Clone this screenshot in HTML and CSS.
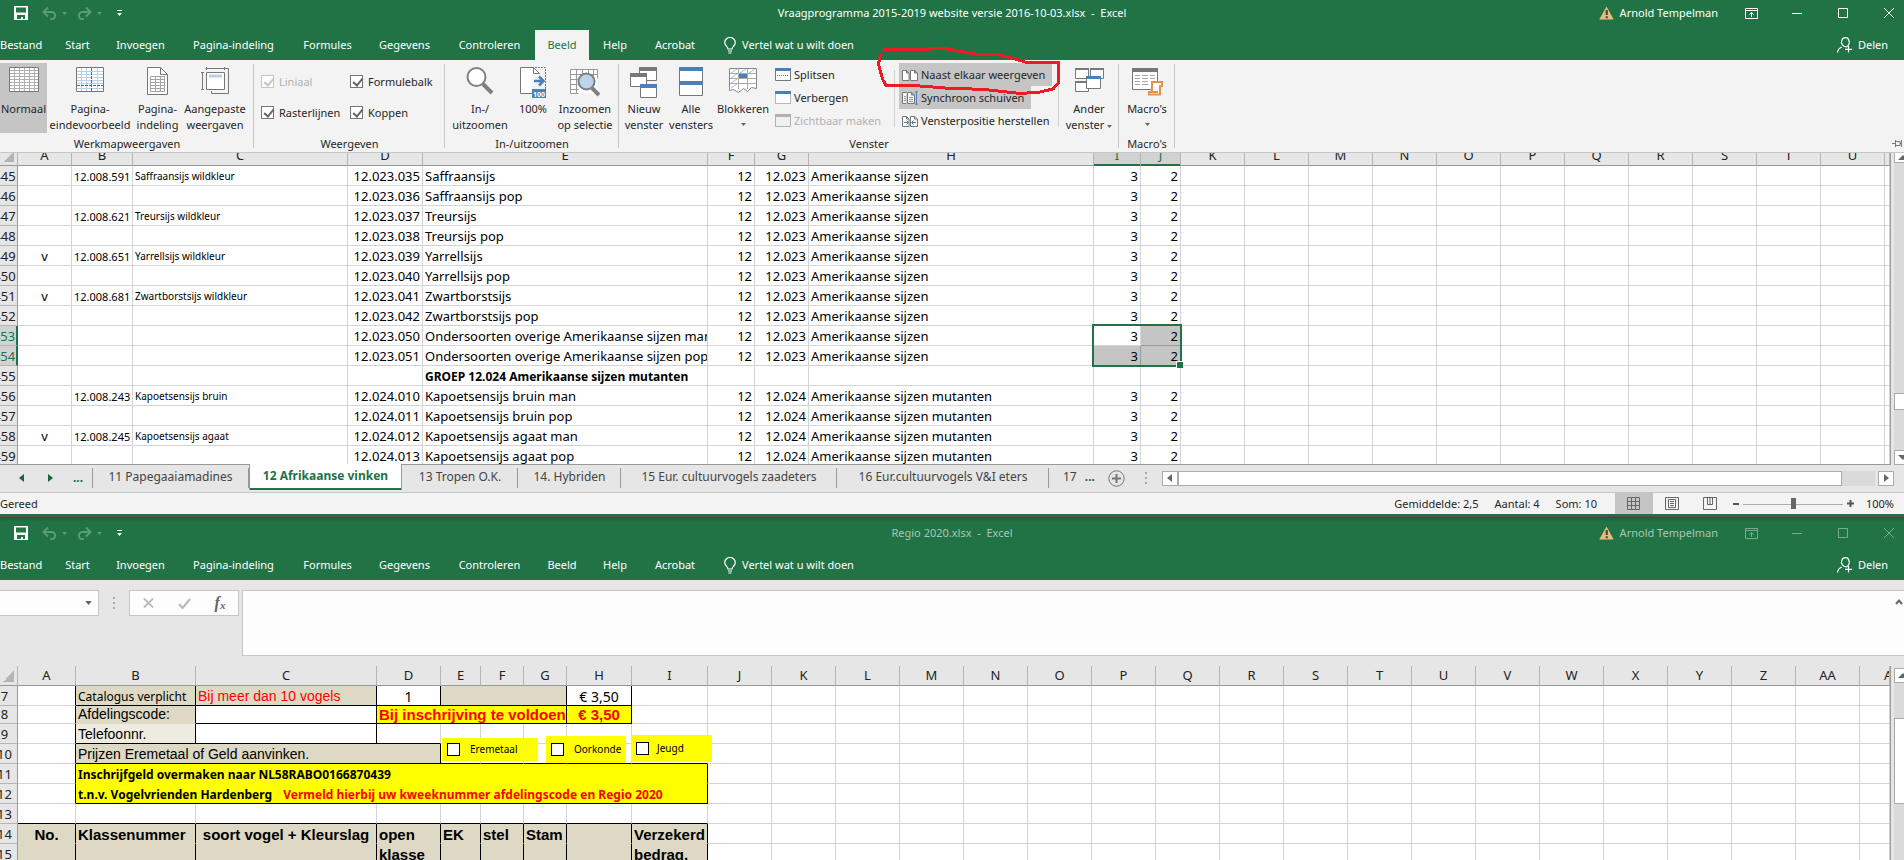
FILE: index.html
```html
<!DOCTYPE html>
<html lang="nl">
<head>
<meta charset="utf-8">
<title>Vraagprogramma 2015-2019 website versie 2016-10-03.xlsx - Excel</title>
<link rel="stylesheet" href="styles.css">
</head>
<body>
<svg class="defs" aria-hidden="true">
  <symbol id="save" viewBox="0 0 14 14"><path d="M0 0h14v14H0z" fill="#fff"/><path d="M2 1.5h10v5H2zM3 9h8v4H9v-2H7v2H3z" fill="#217346"/></symbol>
  <symbol id="undo" viewBox="0 0 15 13"><path d="M6 0.5L1.5 5L6 9.5M2 5h7.5a3.6 3.6 0 0 1 0 7.2H8" fill="none" stroke="currentColor" stroke-width="2"/></symbol>
  <symbol id="redo" viewBox="0 0 15 13"><path d="M9 0.5L13.5 5L9 9.5M13 5H5.5a3.6 3.6 0 0 0 0 7.2H7" fill="none" stroke="currentColor" stroke-width="2"/></symbol>
  <symbol id="down" viewBox="0 0 5 3"><path d="M0 0h5L2.500 3z" fill="currentColor"/></symbol>
  <symbol id="custom" viewBox="0 0 5 6"><path d="M0 0h5v1H0zM0 3h5L2.500 6z" fill="currentColor"/></symbol>
  <symbol id="warn" viewBox="0 0 15 14"><path d="M7.500 0.500L14.700 13.500H0.300z" fill="#e8bd7c"/><path d="M6.700 4h2v5h-2zM6.700 10.200h2v2h-2z" fill="#3b3b3b"/></symbol>
  <symbol id="ribopt" viewBox="0 0 13 11"><path d="M.5.5h12v10H.5zM0 2.500h13M6.500 9V4.500M4.500 6.500l2-2 2 2" fill="none" stroke="currentColor"/></symbol>
  <symbol id="min" viewBox="0 0 10 10"><path d="M0 5.500h10" stroke="currentColor"/></symbol>
  <symbol id="max" viewBox="0 0 10 10"><path d="M.5.5h9v9h-9z" fill="none" stroke="currentColor"/></symbol>
  <symbol id="close" viewBox="0 0 10 10"><path d="M0 0l10 10M10 0L0 10" stroke="currentColor"/></symbol>
  <symbol id="bulb" viewBox="0 0 12 17"><path d="M4 12c0-2-3.300-3.500-3.300-6.500a5.300 5 0 0 1 10.600 0C11.300 8.500 8 10 8 12zM4 14h4M4.500 16h3" fill="none" stroke="#fff" stroke-width="1.200"/></symbol>
  <symbol id="person" viewBox="0 0 15 16"><path d="M.6 15.500c0-3 2-4.500 4.200-5.500M9.300 10c-3-.5-6-3-4.500-6.500C6-.3 11-.3 12 3.500c.8 3-1 5.500-2.700 6.500M11.500 9v6.500M8 12.300h7" fill="none" stroke="#fff" stroke-width="1.200"/></symbol>
</svg>

<section class="window window-top">
  <header class="titlebar">
    <div class="quick">
      <button class="q-save" aria-label="Opslaan"><svg width="14" height="14"><use href="#save"/></svg></button>
      <button class="dim" aria-label="Ongedaan maken"><svg width="15" height="13"><use href="#undo"/></svg><svg width="5" height="3"><use href="#down"/></svg></button>
      <button class="dim" aria-label="Opnieuw"><svg width="15" height="13"><use href="#redo"/></svg><svg width="5" height="3"><use href="#down"/></svg></button>
      <button class="q-more" aria-label="Werkbalk aanpassen"><svg width="5" height="6"><use href="#custom"/></svg></button>
    </div>
    <h1 class="doc">Vraagprogramma 2015-2019 website versie 2016-10-03.xlsx&nbsp; -&nbsp; Excel</h1>
    <div class="caption">
      <svg width="15" height="14"><use href="#warn"/></svg><span class="user">Arnold Tempelman</span>
      <button aria-label="Lintopties"><svg width="13" height="11"><use href="#ribopt"/></svg></button>
      <button aria-label="Minimaliseren"><svg width="10" height="10"><use href="#min"/></svg></button>
      <button aria-label="Maximaliseren"><svg width="10" height="10"><use href="#max"/></svg></button>
      <button aria-label="Sluiten"><svg width="10" height="10"><use href="#close"/></svg></button>
    </div>
  </header>
  <nav class="tabs">
    <button>Bestand</button><button>Start</button><button>Invoegen</button><button>Pagina-indeling</button><button>Formules</button><button>Gegevens</button><button>Controleren</button><button class="active">Beeld</button><button>Help</button><button>Acrobat</button>
    <button class="tell"><svg width="12" height="17"><use href="#bulb"/></svg>Vertel wat u wilt doen</button>
    <button class="share"><svg width="15" height="16"><use href="#person"/></svg>Delen</button>
  </nav>

  <div class="ribbon">
    <div class="group">
      <div class="tools tools-views">
        <button class="big on"><svg width="30" height="25" viewBox="0 0 30 25"><path d="M.5.5h29v24H.5z" fill="#fff"/><path d="M5.500 1v23M10.500 1v23M15.500 1v23M20.500 1v23M25.500 1v23M1 3.500h28M1 6.500h28M1 9.500h28M1 12.500h28M1 15.500h28M1 18.500h28M1 21.500h28" stroke="#b0b0b0"/><path d="M.5.5h29v24H.5z" fill="none" stroke="#777"/></svg><span>Normaal</span></button>
        <button class="big"><svg width="28" height="25" viewBox="0 0 28 25"><path d="M.5.5h27v24H.5z" fill="#fff"/><path d="M5.500 1v23M10.500 1v23M21.500 1v23M1 4.500h26M1 7.500h26M1 10.500h26M1 13.500h26M1 16.500h26M1 21.500h26" stroke="#b9d0ea"/><path d="M15.500 1v23M1 18.500h26" stroke="#666" stroke-dasharray="3 1"/><path d="M.5.5h27v24H.5z" fill="none" stroke="#777"/></svg><span>Pagina-<br>eindevoorbeeld</span></button>
        <button class="big"><svg width="21" height="28" viewBox="0 0 21 28"><path d="M.5.5h13l7 7v20H.5z" fill="#fff" stroke="#777"/><path d="M13.500.5v7h7" fill="none" stroke="#777"/><path d="M3.500 9.500h14v15h-14zM3 12.500h15M3 15.500h15M3 18.500h15M3 21.500h15M8.500 9v15M13.500 9v15" fill="none" stroke="#a5a5a5"/></svg><span>Pagina-<br>indeling</span></button>
        <button class="big"><svg width="28" height="27" viewBox="0 0 28 27"><path d="M5.500 5.500h18v17h-18z" fill="#fff" stroke="#777"/><path d="M8 7.500h13v3H8z" fill="#b9d0ea"/><path d="M4.500 1.500h19M5.500 0v3M23.500 0v3M1.500 5v18M0 5.500h3M0 22.500h3M24 1.500h3.500v25h-17V24" fill="none" stroke="#777"/></svg><span>Aangepaste<br>weergaven</span></button>
      </div>
      <div class="caption-label">Werkmapweergaven</div>
    </div>
    <div class="group">
      <div class="tools checks">
        <label class="off"><input type="checkbox" checked disabled>Liniaal</label>
        <label><input type="checkbox" checked>Formulebalk</label>
        <label><input type="checkbox" checked>Rasterlijnen</label>
        <label><input type="checkbox" checked>Koppen</label>
      </div>
      <div class="caption-label">Weergeven</div>
    </div>
    <div class="group">
      <div class="tools tools-zoom">
        <button class="big"><svg width="28" height="28" viewBox="0 0 28 28"><circle cx="10.500" cy="10" r="9" fill="#fff" stroke="#7f7f7f" stroke-width="2"/><path d="M17 17l9 9" stroke="#7f7f7f" stroke-width="4"/></svg><span>In-/<br>uitzoomen</span></button>
        <button class="big"><svg width="26" height="31" viewBox="0 0 26 31"><path d="M13.500.5H.5v26H12V7h7z" fill="#fff"/><path d="M12 26.500H.5V.5h13l6 6h-6v-6" fill="none" stroke="#777"/><path d="M15 .5h10.500V22" fill="none" stroke="#777" stroke-dasharray="2 1"/><path d="M14 14h9M19 9.500l4.500 4.500-4.500 4.500" fill="none" stroke="#4a7fb8" stroke-width="2.500"/><path d="M12 22h14v9H12z" fill="#4a7fb8"/><text x="13" y="29.500" class="icon-num">100</text></svg><span>100%</span></button>
        <button class="big"><svg width="30" height="30" viewBox="0 0 30 30"><path d="M.5 2.500h27v24H.5z" fill="#fff"/><path d="M.5 2.500h27v9M.5 2.500v24h8M.5 7.500h27M.5 12.500h8M.5 17.500h7M.5 22.500h8M6.500 3v23M12.500 3v5M18.500 3v5M23.500 3v8" fill="none" stroke="#999"/><circle cx="16.500" cy="14.500" r="8" fill="#bcd3ec" stroke="#7f7f7f" stroke-width="2"/><path d="M22 21l7 7" stroke="#7f7f7f" stroke-width="4"/></svg><span>Inzoomen<br>op selectie</span></button>
      </div>
      <div class="caption-label">In-/uitzoomen</div>
    </div>
    <div class="group">
      <div class="tools tools-window">
        <button class="big"><svg width="28" height="31" viewBox="0 0 28 31"><g fill="#fff" stroke="#777"><path d="M9.500.5h17v13h-17z"/><path d="M.5 6.500h16v13H.5z"/><path d="M10.500 17.500h16v13h-16z"/></g><path d="M9 0h18v4H9zM0 6h17v4H0z" fill="#777"/><path d="M10 17h17v4H10z" fill="#4a7fb8"/></svg><span>Nieuw<br>venster</span></button>
        <button class="big"><svg width="24" height="29" viewBox="0 0 24 29"><path d="M.5.5h23v28H.5z" fill="#fff" stroke="#777"/><path d="M0 0h24v4H0zM0 14h24v4H0z" fill="#4a7fb8"/></svg><span>Alle<br>vensters</span></button>
        <button class="big"><svg width="28" height="26" viewBox="0 0 28 26"><path d="M.5 1.500h27v20l-5-1-4 4-4-3-5 4-5-3-4 1z" fill="#fff" stroke="#888"/><path d="M1 6.500h26M1 11.500h26M1 16.500h26M9.500 2v20M18.500 2v20" stroke="#aaa"/><path d="M2 6l6-4M11 6l6-4M20 6l6-4M2 11l6-4M2 16l6-4M2 21l6-4" stroke="#9fbfe2"/><path d="M10 7h8v4h-8z" fill="#4a7fb8"/></svg><span>Blokkeren</span><svg class="drop" width="5" height="3"><use href="#down"/></svg></button>
        <div class="stack">
          <button><svg width="16" height="13" viewBox="0 0 16 13"><path d="M.5.5h15v12H.5z" fill="#fff" stroke="#777"/><path d="M0 0h16v3H0z" fill="#4a7fb8"/><path d="M2 7.500h12" stroke="#4a7fb8" stroke-dasharray="1 1"/></svg>Splitsen</button>
          <button><svg width="16" height="13" viewBox="0 0 16 13"><path d="M.5.5h15v12H.5z" fill="#fff" stroke="#777" stroke-dasharray="1 1"/><path d="M0 0h16v3H0z" fill="#4a7fb8"/></svg>Verbergen</button>
          <button class="off" disabled><svg width="16" height="13" viewBox="0 0 16 13"><path d="M.5.5h15v12H.5z" fill="#f0f0f0" stroke="#b1b1b1"/><path d="M0 0h16v3H0z" fill="#b1b1b1"/></svg>Zichtbaar maken</button>
        </div>
        <div class="stack framed">
          <button class="on"><svg width="16" height="12" viewBox="0 0 16 12"><path d="M.5 1.500h4l2.500 2.500v7.500H.5zM8.500 1.500h4l3 2.500v7.500h-7zM4.500 1.500V4H7M12.500 1.500V4h3" fill="#fff" stroke="#777"/></svg>Naast elkaar weergeven</button>
          <button class="on"><svg width="16" height="16" viewBox="0 0 16 16"><path d="M4 13.500H.5v-11h4M5.500 2.500h4l3 2.500v8.500h-7zM9.500 2.500V5h3" fill="#f4f4f4" stroke="#777"/><path d="M7 7.500h4M7 9.500h4M7 11.500h4M2 6.500h2M2 8.500h2M2 10.500h2" stroke="#999"/><path d="M14.500 1v14M13 2.500L14.500 1 16 2.500M13 13.500l1.500 1.500 1.500-1.500" fill="none" stroke="#4a7fb8"/></svg>Synchroon schuiven</button>
          <button><svg width="16" height="12" viewBox="0 0 16 12"><path d="M.5 1.500h4l2.500 2.500v7.500H.5zM8.500 1.500h4l3 2.500v7.500h-7zM4.500 1.500V4H7M12.500 1.500V4h3" fill="#fff" stroke="#777"/><path d="M2 7.500h4M4.500 5.500l2 2-2 2M14 7.500h-4M11.500 5.500l-2 2 2 2" fill="none" stroke="#4a7fb8"/></svg>Vensterpositie herstellen</button>
        </div>
        <button class="big"><svg width="29" height="26" viewBox="0 0 29 26"><g fill="#fff" stroke="#777"><path d="M.5 1.500h13v10H.5z"/><path d="M15.500 1.500h13v10h-13z"/><path d="M.5 14.500h13v10H.5z"/><path d="M11.500 10.500h14v11h-14z"/></g><path d="M0 1h14v2H0zM15 1h14v2H15zM0 14h11v2H0z" fill="#777"/><path d="M11 9h15v3H11z" fill="#4a7fb8"/></svg><span>Ander<br>venster&nbsp;<svg width="5" height="3" class="inline-drop"><use href="#down"/></svg></span></button>
      </div>
      <div class="caption-label">Venster</div>
    </div>
    <div class="group">
      <div class="tools tools-macro">
        <button class="big"><svg width="31" height="29" viewBox="0 0 31 29"><path d="M.5 1.500h25v21H.5z" fill="#fff" stroke="#777"/><path d="M0 1h26v4H0z" fill="#777"/><path d="M3 8.500h5M10 8.500h6M18 8.500h5M3 11.500h5M10 11.500h6M18 11.500h5M3 14.500h5M10 14.500h6M3 17.500h5M10 17.500h6" stroke="#aaa"/><path d="M20 25V15h10v4h-2v8.500H17v-2.500h9" fill="#fff" stroke="#e8914a" stroke-width="2"/></svg><span>Macro's</span><svg class="drop" width="5" height="3"><use href="#down"/></svg></button>
      </div>
      <div class="caption-label">Macro's</div>
    </div>
    <button class="pin" aria-label="Lint vastmaken"><svg width="10" height="7" viewBox="0 0 10 7"><path d="M0 3.500h3M3.500 0v7M4 1.500h4v4H4M9.500 0v7M8 3.500h1" fill="none" stroke="#777"/></svg></button>
    <svg class="marker" width="188" height="52" viewBox="874 45 188 52"><path d="M883 49.500H914L945 48.500L963 52L976 54L1000 55L1024 61.500L1026 62.500H1058.500V83L1053 89L1040 92L1020 93.500L985 89.500L945 88L920 86L886 85.500L883 80L880 70L878.500 64L880 57L882 54" fill="none" stroke="#ed1c24" stroke-width="3" shape-rendering="crispEdges"/></svg>
  </div>

  <div class="pane">
    <div class="sheet scrolled">
      <table>
        <colgroup><col class="c26"><col class="c54"><col class="c61"><col class="c215"><col class="c75"><col class="c285"><col class="c47"><col class="c54"><col class="c285"><col class="c47"><col class="c40"><col class="c64"><col class="c64"><col class="c64"><col class="c64"><col class="c64"><col class="c64"><col class="c64"><col class="c64"><col class="c64"><col class="c64"><col class="c64"><col></colgroup>
        <thead><tr><th class="corner"></th><th>A</th><th>B</th><th>C</th><th>D</th><th>E</th><th>F</th><th>G</th><th>H</th><th class="sel">I</th><th class="sel">J</th><th>K</th><th>L</th><th>M</th><th>N</th><th>O</th><th>P</th><th>Q</th><th>R</th><th>S</th><th>T</th><th>U</th><th></th></tr></thead>
        <tbody>
        <tr><th>445</th><td></td><td>12.008.591</td><td>Saffraansijs wildkleur</td><td>12.023.035</td><td>Saffraansijs</td><td>12</td><td>12.023</td><td>Amerikaanse sijzen</td><td>3</td><td>2</td><td><td><td><td><td><td><td><td><td><td><td><td></tr>
        <tr><th>446</th><td></td><td></td><td></td><td>12.023.036</td><td>Saffraansijs pop</td><td>12</td><td>12.023</td><td>Amerikaanse sijzen</td><td>3</td><td>2</td><td><td><td><td><td><td><td><td><td><td><td><td></tr>
        <tr><th>447</th><td></td><td>12.008.621</td><td>Treursijs wildkleur</td><td>12.023.037</td><td>Treursijs</td><td>12</td><td>12.023</td><td>Amerikaanse sijzen</td><td>3</td><td>2</td><td><td><td><td><td><td><td><td><td><td><td><td></tr>
        <tr><th>448</th><td></td><td></td><td></td><td>12.023.038</td><td>Treursijs pop</td><td>12</td><td>12.023</td><td>Amerikaanse sijzen</td><td>3</td><td>2</td><td><td><td><td><td><td><td><td><td><td><td><td></tr>
        <tr><th>449</th><td>v</td><td>12.008.651</td><td>Yarrellsijs wildkleur</td><td>12.023.039</td><td>Yarrellsijs</td><td>12</td><td>12.023</td><td>Amerikaanse sijzen</td><td>3</td><td>2</td><td><td><td><td><td><td><td><td><td><td><td><td></tr>
        <tr><th>450</th><td></td><td></td><td></td><td>12.023.040</td><td>Yarrellsijs pop</td><td>12</td><td>12.023</td><td>Amerikaanse sijzen</td><td>3</td><td>2</td><td><td><td><td><td><td><td><td><td><td><td><td></tr>
        <tr><th>451</th><td>v</td><td>12.008.681</td><td>Zwartborstsijs wildkleur</td><td>12.023.041</td><td>Zwartborstsijs</td><td>12</td><td>12.023</td><td>Amerikaanse sijzen</td><td>3</td><td>2</td><td><td><td><td><td><td><td><td><td><td><td><td></tr>
        <tr><th>452</th><td></td><td></td><td></td><td>12.023.042</td><td>Zwartborstsijs pop</td><td>12</td><td>12.023</td><td>Amerikaanse sijzen</td><td>3</td><td>2</td><td><td><td><td><td><td><td><td><td><td><td><td></tr>
        <tr><th class="sel">453</th><td></td><td></td><td></td><td>12.023.050</td><td>Ondersoorten overige Amerikaanse sijzen man</td><td>12</td><td>12.023</td><td>Amerikaanse sijzen</td><td class="anchor">3<span class="selection"></span></td><td class="picked">2</td><td><td><td><td><td><td><td><td><td><td><td><td></tr>
        <tr><th class="sel">454</th><td></td><td></td><td></td><td>12.023.051</td><td>Ondersoorten overige Amerikaanse sijzen pop</td><td>12</td><td>12.023</td><td>Amerikaanse sijzen</td><td class="picked">3</td><td class="picked">2</td><td><td><td><td><td><td><td><td><td><td><td><td></tr>
        <tr><th>455</th><td></td><td></td><td></td><td></td><td class="strong">GROEP 12.024 Amerikaanse sijzen mutanten</td><td></td><td></td><td></td><td></td><td></td><td><td><td><td><td><td><td><td><td><td><td><td></tr>
        <tr><th>456</th><td></td><td>12.008.243</td><td>Kapoetsensijs bruin</td><td>12.024.010</td><td>Kapoetsensijs bruin man</td><td>12</td><td>12.024</td><td>Amerikaanse sijzen mutanten</td><td>3</td><td>2</td><td><td><td><td><td><td><td><td><td><td><td><td></tr>
        <tr><th>457</th><td></td><td></td><td></td><td>12.024.011</td><td>Kapoetsensijs bruin pop</td><td>12</td><td>12.024</td><td>Amerikaanse sijzen mutanten</td><td>3</td><td>2</td><td><td><td><td><td><td><td><td><td><td><td><td></tr>
        <tr><th>458</th><td>v</td><td>12.008.245</td><td>Kapoetsensijs agaat</td><td>12.024.012</td><td>Kapoetsensijs agaat man</td><td>12</td><td>12.024</td><td>Amerikaanse sijzen mutanten</td><td>3</td><td>2</td><td><td><td><td><td><td><td><td><td><td><td><td></tr>
        <tr><th>459</th><td></td><td></td><td></td><td>12.024.013</td><td>Kapoetsensijs agaat pop</td><td>12</td><td>12.024</td><td>Amerikaanse sijzen mutanten</td><td>3</td><td>2</td><td><td><td><td><td><td><td><td><td><td><td><td></tr>
        </tbody>
      </table>
    </div>
    <div class="vscroll"><span class="arrow up cut"></span><span class="track before"></span><span class="thumb small"></span><span class="track"></span><span class="arrow dn"></span></div>
  </div>

  <div class="sheetbar">
    <div class="nav"><button class="tri left" aria-label="Vorige"></button><button class="tri right" aria-label="Volgende"></button><button class="dots" aria-label="Meer bladen">...</button></div>
    <div class="sheettabs"><button>11 Papegaaiamadines</button><button class="current">12 Afrikaanse vinken</button><button>13 Tropen O.K.</button><button>14. Hybriden</button><button>15 Eur. cultuurvogels zaadeters</button><button>16 Eur.cultuurvogels V&amp;I eters</button><button class="last">17 <b>...</b></button></div>
    <button class="add" aria-label="Nieuw blad"><svg width="17" height="17" viewBox="0 0 17 17"><circle cx="8.500" cy="8.500" r="7.700" fill="none" stroke="#777"/><path d="M8.500 4v9M4 8.500h9" stroke="#777" stroke-width="2"/></svg></button>
    <span class="grip"></span>
    <div class="hscroll"><span class="box"><i class="tri left grey"></i></span><span class="bar"></span><span class="rest"></span><span class="box"><i class="tri right grey"></i></span></div>
  </div>
  <footer class="status">
    <span class="ready">Gereed</span>
    <span>Gemiddelde: 2,5</span><span>Aantal: 4</span><span>Som: 10</span>
    <div class="views">
      <button class="on" aria-label="Normaal"><svg width="13" height="13" viewBox="0 0 13 13"><path d="M.5.5h12v12H.5zM4.500 0v13M8.500 0v13M0 4.500h13M0 8.500h13" fill="none" stroke="#666"/></svg></button>
      <button aria-label="Pagina-indeling"><svg width="14" height="13" viewBox="0 0 14 13"><path d="M.5.5h13v12H.5zM3.500 2.500h7v8h-7zM5 4.500h4M5 6.500h4M5 8.500h4" fill="none" stroke="#666"/></svg></button>
      <button aria-label="Pagina-eindevoorbeeld"><svg width="14" height="13" viewBox="0 0 14 13"><path d="M.5.5h13v12H.5zM4.500 0v7.500h5V0M7 0v7.500" fill="none" stroke="#666"/></svg></button>
    </div>
    <div class="zoom"><span class="minus"></span><input type="range" min="0" max="100" value="51" aria-label="Zoomen"><svg width="7" height="7" viewBox="0 0 7 7"><path d="M3.500 0v7M0 3.500h7" stroke="#555" stroke-width="2"/></svg></div>
    <span class="pct">100%</span>
  </footer>
</section>

<section class="window window-bottom">
  <header class="titlebar">
    <div class="quick">
      <button class="q-save" aria-label="Opslaan"><svg width="14" height="14"><use href="#save"/></svg></button>
      <button class="dim" aria-label="Ongedaan maken"><svg width="15" height="13"><use href="#undo"/></svg><svg width="5" height="3"><use href="#down"/></svg></button>
      <button class="dim" aria-label="Opnieuw"><svg width="15" height="13"><use href="#redo"/></svg><svg width="5" height="3"><use href="#down"/></svg></button>
      <button class="q-more" aria-label="Werkbalk aanpassen"><svg width="5" height="6"><use href="#custom"/></svg></button>
    </div>
    <h1 class="doc">Regio 2020.xlsx&nbsp; -&nbsp; Excel</h1>
    <div class="caption">
      <svg width="15" height="14"><use href="#warn"/></svg><span class="user">Arnold Tempelman</span>
      <button aria-label="Lintopties"><svg width="13" height="11"><use href="#ribopt"/></svg></button>
      <button aria-label="Minimaliseren"><svg width="10" height="10"><use href="#min"/></svg></button>
      <button aria-label="Maximaliseren"><svg width="10" height="10"><use href="#max"/></svg></button>
      <button aria-label="Sluiten"><svg width="10" height="10"><use href="#close"/></svg></button>
    </div>
  </header>
  <nav class="tabs">
    <button>Bestand</button><button>Start</button><button>Invoegen</button><button>Pagina-indeling</button><button>Formules</button><button>Gegevens</button><button>Controleren</button><button>Beeld</button><button>Help</button><button>Acrobat</button>
    <button class="tell"><svg width="12" height="17"><use href="#bulb"/></svg>Vertel wat u wilt doen</button>
    <button class="share"><svg width="15" height="16"><use href="#person"/></svg>Delen</button>
  </nav>
  <div class="formulabar">
    <div class="namebox"><input type="text" aria-label="Naamvak"><svg width="7" height="4" viewBox="0 0 5 3"><use href="#down"/></svg></div>
    <span class="grip"></span>
    <div class="fx">
      <button aria-label="Annuleren"><svg width="11" height="10" viewBox="0 0 11 10"><path d="M1 .5l9 9M10 .5l-9 9" stroke="#bbb" stroke-width="1.800"/></svg></button>
      <button aria-label="Invoeren"><svg width="13" height="11" viewBox="0 0 13 11"><path d="M1 6l3.500 4L12 1" fill="none" stroke="#bbb" stroke-width="2.200"/></svg></button>
      <button class="fn" aria-label="Functie invoegen">f<sub>x</sub></button>
    </div>
    <div class="formula"><textarea aria-label="Formulebalk"></textarea><svg width="8" height="6" viewBox="0 0 8 6"><path d="M1 5l3-3.500L7 5" fill="none" stroke="#666" stroke-width="2"/></svg></div>
  </div>
  <div class="pane">
    <div class="sheet form">
      <table>
        <colgroup><col class="c26"><col class="c58"><col class="c120"><col class="c181"><col class="c64"><col class="c40"><col class="c43"><col class="c43"><col class="c65"><col class="c76"><col class="c64" span="18"><col></colgroup>
        <thead><tr><th class="corner"></th><th>A</th><th>B</th><th>C</th><th>D</th><th>E</th><th>F</th><th>G</th><th>H</th><th>I</th><th>J</th><th>K</th><th>L</th><th>M</th><th>N</th><th>O</th><th>P</th><th>Q</th><th>R</th><th>S</th><th>T</th><th>U</th><th>V</th><th>W</th><th>X</th><th>Y</th><th>Z</th><th>AA</th><th class="clip">AB</th></tr></thead>
        <tbody>
        <tr><th>7</th><td class="br"></td><td class="sand br bb small">Catalogus verplicht</td><td class="sand br bb arial red">Bij meer dan 10 vogels</td><td class="br bb mid large">1</td><td class="sand br bb" colspan="3"></td><td class="br bb mid large">€ 3,50</td><td></td>
          <td><td><td><td><td> <td><td><td><td><td> <td><td><td><td><td> <td><td><td><td></tr>
        <tr class="short"><th>8</th><td class="br"></td><td class="sand br arial bb-soft">Afdelingscode:</td><td class="br bb"></td><td class="yellow br bb arial red strong" colspan="4">Bij inschrijving te voldoen</td><td class="yellow br bb arial red strong mid">€ 3,50</td><td></td>
          <td><td><td><td><td> <td><td><td><td><td> <td><td><td><td><td> <td><td><td><td></tr>
        <tr><th>9</th><td class="br"></td><td class="pale br bb arial">Telefoonnr.</td><td class="br bb"></td><td class="bb"></td><td></td><td></td><td></td><td></td><td></td>
          <td><td><td><td><td> <td><td><td><td><td> <td><td><td><td><td> <td><td><td><td></tr>
        <tr><th>10</th><td class="br"></td><td class="sand br bb arial" colspan="3">Prijzen Eremetaal of Geld aanvinken.</td><td class="bb anchor"><div class="options"><label class="opt opt-a"><input type="checkbox">Eremetaal</label><label class="opt opt-b"><input type="checkbox">Oorkonde</label><label class="opt opt-c"><input type="checkbox">Jeugd</label></div></td><td class="bb"></td><td class="bb"></td><td class="bb"></td><td class="bb"></td>
          <td><td><td><td><td> <td><td><td><td><td> <td><td><td><td><td> <td><td><td><td></tr>
        <tr><th>11</th><td class="br"></td><td class="yellow br nb strong" colspan="8">Inschrijfgeld overmaken naar NL58RABO0166870439</td>
          <td><td><td><td><td> <td><td><td><td><td> <td><td><td><td><td> <td><td><td><td></tr>
        <tr><th>12</th><td class="br"></td><td class="yellow br bb strong" colspan="8">t.n.v. Vogelvrienden Hardenberg <span class="red note">Vermeld hierbij uw kweeknummer afdelingscode en Regio 2020</span></td>
          <td><td><td><td><td> <td><td><td><td><td> <td><td><td><td><td> <td><td><td><td></tr>
        <tr><th>13</th><td class="bb"></td><td class="bb"></td><td class="bb"></td><td class="bb"></td><td class="bb"></td><td class="bb"></td><td class="bb"></td><td class="bb"></td><td class="bb"></td>
          <td><td><td><td><td> <td><td><td><td><td> <td><td><td><td><td> <td><td><td><td></tr>
        <tr class="heads"><th>14</th><td class="mid">No.</td><td>Klassenummer</td><td class="mid">soort vogel + Kleurslag</td><td>open</td><td>EK</td><td>stel</td><td>Stam</td><td></td><td>Verzekerd</td>
          <td><td><td><td><td> <td><td><td><td><td> <td><td><td><td><td> <td><td><td><td></tr>
        <tr class="heads"><th>15</th><td></td><td></td><td></td><td>klasse</td><td></td><td></td><td></td><td></td><td>bedrag.</td>
          <td><td><td><td><td> <td><td><td><td><td> <td><td><td><td><td> <td><td><td><td></tr>
        </tbody>
      </table>
    </div>
    <div class="vscroll offset"><span class="arrow up"></span><span class="track gap"></span><span class="thumb large"></span><span class="track"></span></div>
  </div>
</section>
</body>
</html>
```

FILE: styles.css
```css
* { box-sizing: border-box; }
html, body { height: 100%; margin: 0; overflow: hidden; }
body {
  display: grid;
  grid-template-rows: 60% 40%;
  grid-template-columns: minmax(0, 1fr);
  font-family: "Noto Sans", "Open Sans", sans-serif;
  font-size: 11px;
  line-height: 16px;
  color: #262626;
  background: #e6e6e6;
}
.defs { position: absolute; width: 0; height: 0; }
button, input, textarea { font: inherit; color: inherit; margin: 0; padding: 0; border: 0; background: none; }
button { white-space: nowrap; }
svg { display: block; flex: none; }

.window { display: flex; flex-direction: column; min-height: 0; overflow: hidden; }
.window-top { border-bottom: 2px solid #217346; }
.window-bottom { border-top: 1px solid #4d4d4d; }

/* title bar */
.titlebar {
  display: grid;
  grid-template-columns: 1fr auto 1fr;
  align-items: center;
  height: 26px;
  flex: none;
  background: #217346;
  color: #fff;
}
.window-bottom .titlebar { height: 33px; padding-bottom: 1px; background: linear-gradient(#1c5f3a, #217346 5px); }
.doc { margin: 0; font-size: 11px; font-weight: 400; }
.window-bottom .doc, .window-bottom .user { color: #a6c7b5; }
.window-bottom .caption button { color: #7aab90; }
.quick { display: flex; align-items: center; padding-left: 14px; }
.quick button { display: flex; align-items: center; gap: 5px; height: 16px; }
.q-save { margin-right: 14px; }
.quick .dim { margin-right: 10px; color: #5b9a78; }
.quick .q-more { margin-left: 5px; }
.caption { display: flex; align-items: center; justify-content: flex-end; margin-right: -8px; }
.caption button { display: grid; place-items: center; width: 46px; height: 22px; }
.user { margin: 0 10px 0 6px; }

/* ribbon tabs */
.tabs {
  display: grid;
  grid-template-columns: 42px 71px 55px 131px 57px 97px 73px 63px 52px 68px auto 1fr;
  height: 30px;
  flex: none;
  background: #217346;
  color: #fff;
}
.window-top .tabs { height: 34px; padding-top: 4px; }
.tabs button:nth-child(8) { margin-left: 9px; }
.tabs .active { background: #f3f3f3; color: #217346; }
.tabs .tell, .tabs .share { display: flex; align-items: center; gap: 6px; }
.tabs .tell { padding-left: 15px; }
.tabs .share { justify-self: end; padding-right: 16px; }

/* ribbon */
.ribbon { position: relative; display: flex; flex: none; height: 93px; background: #f3f3f3; border-bottom: 1px solid #c6c6c6; }
.group { position: relative; display: flex; flex-direction: column; justify-content: space-between; padding-top: 3px; }
.group::after { content: ""; position: absolute; right: 0; top: 4px; bottom: 4px; width: 1px; background: #c8c8c8; }
.tools { display: grid; height: 70px; }
.tools-views { grid-template-columns: 47px 86px 49px 72px; }
.tools-views .big:last-child { padding-right: 6px; }
.tools-zoom { grid-template-columns: 70px 36px 68px; }
.tools-window { grid-template-columns: 50px 44px 60px 121px 165px 60px; }
.tools-macro { grid-template-columns: 56px; }
.caption-label { text-align: center; line-height: 16px; }
.big { display: flex; flex-direction: column; align-items: center; justify-content: space-between; line-height: 16px; padding-top: 4px; position: relative; }
.big > span { height: 32px; }
.drop, .inline-drop { color: #666; }
.drop { position: absolute; bottom: 7px; left: calc(50% - 2px); }
.inline-drop { display: inline-block; vertical-align: middle; }
.on { background: #c5c5c5; }
.icon-num { font: bold 7px "Open Sans", sans-serif; fill: #fff; }
.off { color: #b1b1b1; }
.checks { grid-template-columns: 89px 94px; grid-template-rows: 31px 31px; padding: 3px 1px 0 7px; }
.checks label { display: flex; align-items: center; gap: 5px; white-space: nowrap; }
.checks input { appearance: none; flex: none; width: 13px; height: 13px; border: 1px solid #767676; background: #fff; }
.checks .off input { border-color: #c6c6c6; }
.checks input::after { content: ""; display: block; width: 4px; height: 8px; margin: 0 0 0 4px; border: solid #666; border-width: 0 2px 2px 0; transform: rotate(40deg); }
.checks .off input::after { border-color: #c6c6c6; }
.stack { display: flex; flex-direction: column; align-items: flex-start; }
.stack button { display: flex; align-items: center; gap: 3px; height: 23px; padding: 0 2px; }
.stack.framed { position: relative; padding-left: 5px; }
.stack.framed::before, .stack.framed::after { content: ""; position: absolute; top: 7px; bottom: 6px; width: 1px; background: #d0d0d0; }
.stack.framed::before { left: 0; }
.stack.framed::after { right: 0; }
.stack.framed button { padding: 0 7px 0 3px; }
.pin { position: absolute; right: 2px; bottom: 5px; }
.marker { position: absolute; left: 874px; top: -15px; pointer-events: none; }

/* worksheet panes */
.pane { display: flex; flex: 1; min-height: 0; overflow: hidden; background: #e6e6e6; }
.sheet { flex: 1; min-width: 0; overflow: hidden; border-right: 1px solid #999; margin-right: 3px; }
.window-top .sheet { border-bottom: 1px solid #999; }
.sheet table { table-layout: fixed; width: calc(100% + 8px); margin-left: -8px; border-spacing: 0; border-collapse: separate; background: #fff; color: #000; }
.scrolled table { margin-top: -7px; }
.sheet td, .sheet th { height: 20px; padding: 0 2px; line-height: 19px; white-space: nowrap; border: solid #d4d4d4; border-width: 0 1px 1px 0; overflow: hidden; font-size: 13px; font-weight: 400; }
.sheet tbody td, .sheet tbody th { padding-top: 2px; line-height: 17px; }
.sheet th { background: #e6e6e6; border-color: #b5b5b5; padding: 0; text-align: center; color: #222; border-right-color: #999; }
.sheet tbody th { padding-left: 0; padding-right: 0; }
.sheet thead th { border-bottom-color: #999; border-right-color: #b5b5b5; }
.sheet thead th.corner { background: linear-gradient(135deg, transparent 50%, #b5b5b5 50%) 11px 5px / 11px 11px no-repeat #e6e6e6; }
.sheet th.clip { padding-left: 24px; text-align: left; }
.sheet th.sel { background: #d2d2d2; color: #217346; }
.sheet thead th.sel { box-shadow: inset 0 -1px #217346; border-bottom-color: #217346; }
.sheet tbody th.sel { border-right: 2px solid #217346; }
.scrolled td:nth-child(2) { text-align: center; }
.scrolled td:nth-child(3) { font-size: 11px; text-align: right; }
.scrolled td:nth-child(4) { font-size: 10px; }
.scrolled td:nth-child(5), .scrolled td:nth-child(7), .scrolled td:nth-child(8), .scrolled td:nth-child(10), .scrolled td:nth-child(11) { text-align: right; }
.sheet td.picked { background: #c5c5c5; border-color: #999; }
.sheet td.anchor { position: relative; overflow: visible; }
.selection { position: absolute; left: -2px; top: -2px; width: 90px; height: 43px; border: 2px solid #217346; }
.selection::after { content: ""; position: absolute; right: -3px; bottom: -3px; width: 6px; height: 6px; background: #217346; border: solid #fff; border-width: 1px 0 0 1px; }
.c26 { width: 26px; } .c40 { width: 40px; } .c43 { width: 43px; } .c47 { width: 47px; }
.c54 { width: 54px; } .c58 { width: 58px; } .c61 { width: 61px; } .c64 { width: 64px; }
.c65 { width: 65px; } .c75 { width: 75px; } .c76 { width: 76px; } .c120 { width: 120px; }
.c181 { width: 181px; } .c215 { width: 215px; } .c285 { width: 285px; }

/* vertical scroll bar */
.vscroll { display: flex; flex-direction: column; width: 10px; overflow: hidden; }
.vscroll.offset { padding-top: 2px; }
.vscroll span { flex: none; width: 17px; border: 1px solid #ababab; background: #fff; }
.vscroll .track { border: 0; background: #dadada; flex: 1; }
.vscroll .before { flex: 0 0 230px; }
.vscroll .gap { flex: 0 0 35px; }
.vscroll .small { height: 17px; }
.vscroll .large { height: 86px; }
.vscroll .arrow { display: grid; place-items: center; height: 15px; }
.vscroll .arrow.cut { height: 10px; border-top: 0; }
.arrow::after { content: ""; border: 5px solid transparent; border-width: 0 5px 5px; border-bottom-color: #666; }
.arrow.dn::after { border-width: 5px 5px 0; border-color: #666 transparent; }

/* sheet tabs */
.sheetbar { display: flex; align-items: center; flex: none; height: 28px; padding-bottom: 1px; background: #e6e6e6; border-bottom: 1px solid #c6c6c6; }
.nav { display: flex; align-items: center; width: 92px; padding-left: 19px; font-size: 12px; }
.tri { width: 5px; height: 8px; border: solid transparent; border-width: 4px 0; }
.tri.left { border-right: 5px solid #0e6b38; }
.tri.right { border-left: 5px solid #0e6b38; }
.nav .right { margin: 0 20px 0 24px; }
.nav .dots, .last b { color: #0e6b38; font-weight: 700; }
.sheettabs { display: grid; grid-template-columns: 157px 153px 116px 103px 216px 212px auto; align-self: stretch; font-size: 12px; }
.sheettabs button { position: relative; color: #444; padding-bottom: 2px; }
.sheettabs button:not(.current, .last)::after { content: ""; position: absolute; right: 0; top: 3px; bottom: 3px; width: 1px; background: #999; }
.sheettabs button:first-child::before { content: ""; position: absolute; left: 0; top: 3px; bottom: 3px; width: 1px; background: #999; }
.sheettabs .current { background: #fff; color: #217346; font-weight: 700; margin: -1px 0 1px; border: solid #999; border-width: 0 1px; box-shadow: inset 0 -2px #217346; }
.sheettabs .last { padding-left: 14px; }
.last b { margin-left: 5px; }
.add { margin-left: 13px; }
.grip { width: 2px; height: 12px; margin: 0 15px 0 20px; background: repeating-linear-gradient(#aaa 0 2px, transparent 2px 5px); }
.hscroll { display: flex; flex: 1; height: 15px; margin-right: 10px; }
.hscroll .box { display: grid; place-items: center; width: 16px; background: #fff; border: 1px solid #ababab; }
.hscroll .bar { flex: 1; background: #fff; border: 1px solid #ababab; }
.hscroll .rest { width: 33px; margin-right: 3px; background: #dadada; }
.tri.left.grey { border-right-color: #666; }
.tri.right.grey { border-left-color: #666; }

/* status bar */
.status { display: flex; align-items: center; flex: none; gap: 16px; height: 21px; padding-right: 10px; background: #f3f3f3; }
.ready { margin-right: auto; }
.views { display: flex; align-self: stretch; margin-left: 2px; }
.views button { display: grid; place-items: center; width: 38px; }
.zoom { display: flex; align-items: center; gap: 4px; margin-left: -16px; padding-left: 4px; }
.minus { width: 6px; height: 2px; background: #555; }
.zoom input { appearance: none; width: 100px; height: 12px; background: linear-gradient(#ababab, #ababab) 0 6px / 100% 1px no-repeat; }
.zoom input::-webkit-slider-thumb { appearance: none; width: 5px; height: 11px; background: #666; }
.pct { margin-left: -4px; }

/* formula bar */
.formulabar { display: flex; align-items: flex-start; flex: none; height: 86px; padding-top: 10px; background: #e6e6e6; }
.namebox, .fx, .formula { display: flex; align-items: center; background: #fdfdfd; border: 1px solid #c6c6c6; }
.namebox { width: 99px; height: 26px; border-left: 0; padding-right: 6px; color: #666; }
.namebox input { flex: 1; min-width: 0; }
.formulabar .grip { margin: 7px 14px 0; }
.fx { width: 110px; height: 26px; margin-right: 3px; }
.fx button { flex: 1; display: grid; place-items: center; }
.fx .fn { display: block; font: italic bold 16px "Liberation Serif", serif; color: #666; }
.fn sub { font-size: 11px; vertical-align: -1px; }
.formula { flex: 1; height: 66px; align-items: flex-start; padding: 8px 1px 0 0; border-right: 0; }
.formula textarea { flex: 1; height: 50px; resize: none; }

/* entry form sheet */
.sheet td.br { border-right-color: #000; }
.sheet td.bb { border-bottom-color: #000; }
.sheet td.nb { border-bottom-color: #ff0; }
.sheet .short td, .sheet .short th { height: 18px; line-height: 17px; padding-top: 0; }
.sand { background: #ddd9c4; }
.sheet td.bb-soft { border-bottom-color: #ddd9c4; }
.pale { background: #eeece1; }
.yellow { background: #ff0; }
.sheet td.small { font-size: 12px; }
.sheet td.large { font-size: 14px; }
.sheet td.strong { font-size: 12px; font-weight: 700; }
.sheet td.arial { font-family: "Liberation Sans", Arial, sans-serif; font-size: 14px; }
.sheet td.arial.strong { font-size: 15px; }
.red { color: #f00; }
.mid { text-align: center; }
.note { margin-left: 8px; }
.sheet .heads td:nth-child(-n+10) { background: #ddd9c4; border-right-color: #000; border-bottom-color: #ddd9c4; font: 700 15px/17px "Liberation Sans", Arial, sans-serif; }
.options { position: absolute; left: 1px; top: -9px; z-index: 1; display: flex; align-items: flex-start; }
.opt { display: flex; align-items: center; background: #ff0; font-size: 10px; padding-left: 5px; }
.opt input { appearance: none; width: 13px; height: 13px; border: 1px solid #000; background: #fff; margin-right: 10px; }
.opt-a { width: 96px; height: 23px; margin: 3px 8px 0 0; }
.opt-b { width: 80px; height: 27px; margin: 1px 5px 0 0; }
.opt-c { width: 81px; height: 27px; }
.opt-c input { margin-right: 8px; }
```
